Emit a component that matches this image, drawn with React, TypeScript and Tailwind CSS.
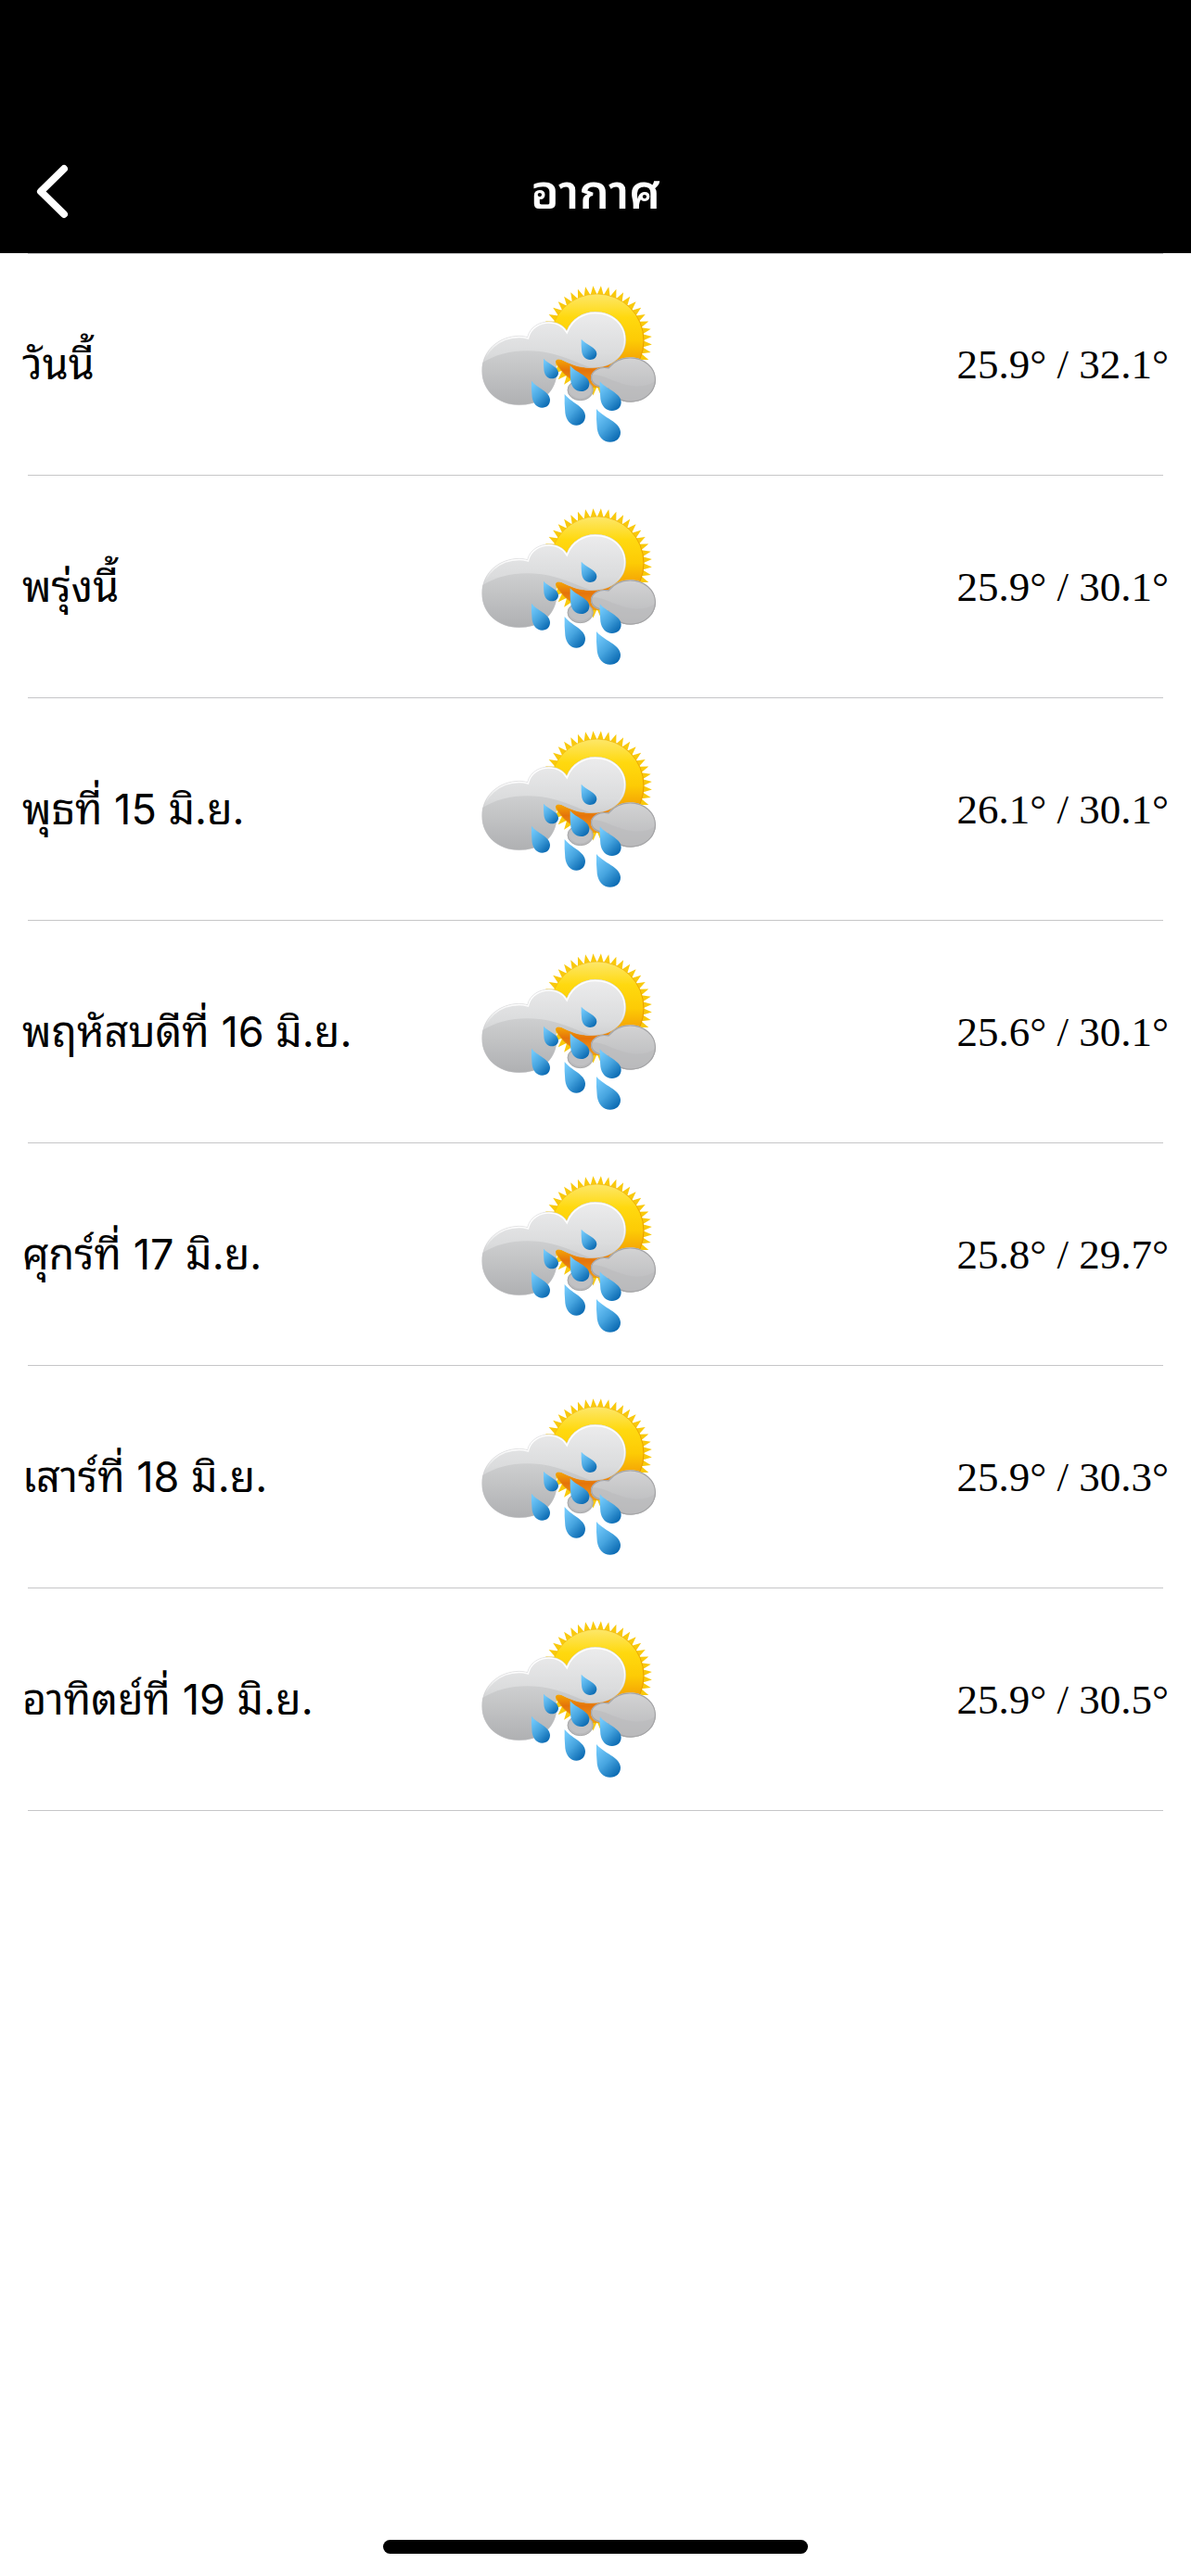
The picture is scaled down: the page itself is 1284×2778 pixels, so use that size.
type Forecast = {
  day: string;
  low: string;
  high: string;
};

type DropProps = {
  x: number;
  y: number;
  width: number;
  height: number;
};

const forecasts: Forecast[] = [
  { day: "วันนี้", low: "25.9", high: "32.1" },
  { day: "พรุ่งนี้", low: "25.9", high: "30.1" },
  { day: "พุธที่ 15 มิ.ย.", low: "26.1", high: "30.1" },
  { day: "พฤหัสบดีที่ 16 มิ.ย.", low: "25.6", high: "30.1" },
  { day: "ศุกร์ที่ 17 มิ.ย.", low: "25.8", high: "29.7" },
  { day: "เสาร์ที่ 18 มิ.ย.", low: "25.9", high: "30.3" },
  { day: "อาทิตย์ที่ 19 มิ.ย.", low: "25.9", high: "30.5" },
];

const drops: DropProps[] = [
  { x: 383, y: 227, width: 50, height: 67 },
  { x: 261, y: 290, width: 48, height: 65 },
  { x: 347, y: 313, width: 62, height: 83 },
  { x: 222, y: 362, width: 60, height: 87 },
  { x: 443, y: 364, width: 69, height: 95 },
  { x: 329, y: 405, width: 67, height: 101 },
  { x: 432, y: 453, width: 78, height: 107 },
];

const CLOUD =
  "M182 440C115 440 62 395 62 330C62 262 118 218 182 217C192 217 202 219 209 221C217 188 248 171 278 171C305 171 325 183 336 200C352 162 388 139 428 139C485 139 527 178 527 228C527 282 483 320 418 320C370 320 345 305 320 294C305 288 297 294 300 306C304 320 304 340 301 356C290 406 245 440 182 440Z";

const SMALL_CLOUD =
  "M471 319C487 299 511 286 541 286C587 286 624 318 624 358C624 399 588 431 543 431C510 431 483 414 471 389C438 384 413 374 414 350C415 329 441 313 471 319Z";

// Star outline that puts the short rays round the sun's disc.
function sunRays(rays: number) {
  const points: string[] = [];
  for (let i = 0; i < rays * 2; i++) {
    const radius = i % 2 === 0 ? 149 : 178;
    const angle = (Math.PI * i) / rays - Math.PI / 2;
    const x = 434 + radius * Math.cos(angle);
    const y = 232 + radius * Math.sin(angle);
    points.push(`${x.toFixed(1)},${y.toFixed(1)}`);
  }
  return points.join(" ");
}

function Drop({ x, y, width, height }: DropProps) {
  return (
    <path
      d="M0 0C28 26 100 40 100 70C100 89 82 100 57 100C28 100 8 84 3 60C0 40 -1 20 0 0Z"
      transform={`translate(${x} ${y}) scale(${width / 100} ${height / 100})`}
      fill="url(#drop)"
    />
  );
}

// Gradients and clips shared by every row's icon.
function IconDefs() {
  return (
    <svg className="absolute h-0 w-0" aria-hidden="true">
      <defs>
        <linearGradient id="sun" x1="0" y1="0" x2="0" y2="1">
          <stop offset="0" stopColor="#fde76a" />
          <stop offset="0.25" stopColor="#ffd90f" />
          <stop offset="0.5" stopColor="#fdcb05" />
          <stop offset="0.7" stopColor="#f5a605" />
          <stop offset="0.82" stopColor="#e5740a" />
          <stop offset="1" stopColor="#ee9a1c" />
        </linearGradient>
        <linearGradient id="sunEdge" x1="0" y1="0" x2="1" y2="0.6">
          <stop offset="0.3" stopColor="#e8a800" stopOpacity="0.4" />
          <stop offset="1" stopColor="#e99a00" />
        </linearGradient>
        <linearGradient id="cloud" gradientUnits="userSpaceOnUse" x1="0" y1="140" x2="0" y2="330">
          <stop offset="0" stopColor="#ececed" />
          <stop offset="0.7" stopColor="#dbdcdd" />
          <stop offset="1" stopColor="#cecfd0" />
        </linearGradient>
        <linearGradient id="cloudShade" gradientUnits="userSpaceOnUse" x1="0" y1="265" x2="0" y2="440">
          <stop offset="0" stopColor="#cecfd0" />
          <stop offset="1" stopColor="#afb0b2" />
        </linearGradient>
        <linearGradient id="cloudRim" gradientUnits="userSpaceOnUse" x1="0" y1="140" x2="0" y2="290">
          <stop offset="0" stopColor="#fff" />
          <stop offset="0.5" stopColor="#fff" />
          <stop offset="1" stopColor="#fff" stopOpacity="0" />
        </linearGradient>
        <linearGradient id="smallCloud" x1="0" y1="0" x2="0" y2="1">
          <stop offset="0" stopColor="#d3d3d4" />
          <stop offset="1" stopColor="#b7b8ba" />
        </linearGradient>
        <linearGradient id="drop" x1="0.1" y1="0.1" x2="0.75" y2="1">
          <stop offset="0" stopColor="#72c9fb" />
          <stop offset="0.5" stopColor="#46a4df" />
          <stop offset="1" stopColor="#0b6ab2" />
        </linearGradient>
        <clipPath id="cloudClip">
          <path d={CLOUD} />
        </clipPath>
        <clipPath id="smallCloudClip">
          <path d={SMALL_CLOUD} />
        </clipPath>
      </defs>
    </svg>
  );
}

function SunRainIcon() {
  return (
    <svg viewBox="0 0 690 618" className="w-full" aria-hidden="true">
      <polygon points={sunRays(44)} fill="#f9c90c" />
      <circle cx="434" cy="232" r="151" fill="url(#sun)" stroke="url(#sunEdge)" strokeWidth="3" />

      <ellipse cx="380" cy="392" rx="41" ry="33" fill="#b9b9bb" stroke="#a9a9aa" strokeWidth="3" />
      <ellipse cx="380" cy="390" rx="36" ry="28" fill="#c1c1c3" />

      <path d={CLOUD} fill="url(#cloud)" />
      <g clipPath="url(#cloudClip)">
        <path
          d="M50 312C110 268 185 258 255 268C315 276 360 300 420 322V450H50Z"
          fill="url(#cloudShade)"
        />
        <path d={CLOUD} fill="none" stroke="url(#cloudRim)" strokeWidth="11" />
      </g>
      <path d={CLOUD} fill="none" stroke="#c6c6c7" strokeWidth="2" strokeOpacity="0.6" />

      <path d={SMALL_CLOUD} fill="url(#smallCloud)" />
      <g clipPath="url(#smallCloudClip)">
        <path d="M410 345C450 333 490 375 560 380C590 380 610 375 625 360V435H410Z" fill="#babbbd" fillOpacity="0.6" />
        <path d={SMALL_CLOUD} fill="none" stroke="#a5a5a7" strokeWidth="7" />
      </g>

      {drops.map((drop) => (
        <Drop key={`${drop.x}-${drop.y}`} {...drop} />
      ))}
    </svg>
  );
}

function ForecastRow({ day, low, high }: Forecast) {
  return (
    <li className="flex h-60 flex-col">
      <div className="grid flex-1 grid-cols-[17fr_230px_19fr] items-center px-6">
        <p className="whitespace-nowrap">{day}</p>
        <SunRainIcon />
        <p className="text-right font-['Liberation_Serif',serif] whitespace-nowrap">
          {low}° / {high}°
        </p>
      </div>
      <hr className="mx-[30px] border-[#c6c6c8]" />
    </li>
  );
}

export default function App() {
  return (
    <div className="flex min-h-screen flex-col bg-white font-[Inter,'Noto_Sans_Thai_Looped',Loma,'Noto_Sans_Thai',sans-serif] text-[45px] leading-[60px] text-black">
      <header className="bg-black pt-[141px] text-white">
        <div className="grid h-[132px] grid-cols-[1fr_auto_1fr] items-center">
          <button type="button" aria-label="ย้อนกลับ" className="flex h-full w-28 items-center pl-9">
            <svg width="40" height="64" viewBox="0 0 40 64" fill="none" aria-hidden="true">
              <path
                d="M33 7L8 31.500L33 56"
                stroke="currentColor"
                strokeWidth="8"
                strokeLinecap="round"
                strokeLinejoin="round"
              />
            </svg>
          </button>
          <h1 className="text-[51px] font-semibold">อากาศ</h1>
        </div>
      </header>

      <main>
        <IconDefs />
        <hr className="mx-[30px] -mb-px border-[#c6c6c8]" />
        <ul>
          {forecasts.map((forecast) => (
            <ForecastRow key={forecast.day} {...forecast} />
          ))}
        </ul>
      </main>

      <footer className="mt-auto flex justify-center pb-6">
        <div className="h-[15px] w-[458px] rounded-full bg-black" />
      </footer>
    </div>
  );
}
